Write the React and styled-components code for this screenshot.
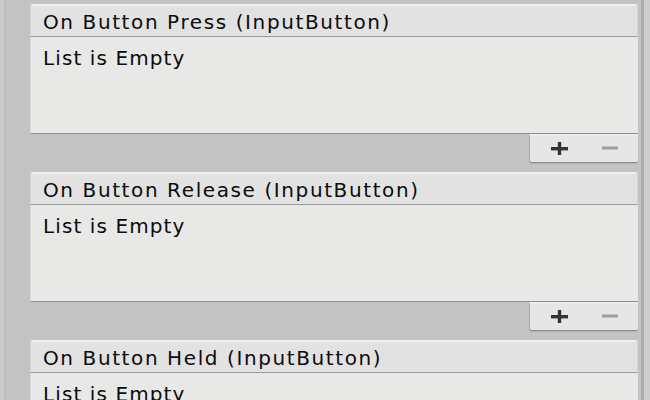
import React from 'react';
import styled, { createGlobalStyle } from 'styled-components';

const GlobalStyle = createGlobalStyle`
  html, body {
    margin: 0;
    padding: 0;
    background: #c3c3c3;
  }
  body {
    font-family: "DejaVu Sans", Verdana, sans-serif;
  }
`;

const Page = styled.div`
  display: flex;
  width: 650px;
  height: 400px;
  overflow: hidden;
  background: #c3c3c3;
`;

const Gutter = styled.div`
  width: 4px;
  flex: none;
  background: #cbcbcb;
  border-right: 2px solid #bdbdbd;
`;

const List = styled.div`
  flex: 1;
  display: flex;
  flex-direction: column;
  gap: 9px;
  padding: 4px 3px 0 24px;
`;

const ScrollEdge = styled.div`
  width: 6px;
  flex: none;
  background: #cdcdcd;
  border-left: 3px solid #ababab;
`;

const Event = styled.div`
  display: flex;
  flex-direction: column;
  flex: none;
`;

const Header = styled.div`
  height: 33px;
  box-sizing: border-box;
  padding: 5px 0 0 12px;
  background: #e2e2e2;
  border: 1px solid #d6d6d6;
  border-top-color: #eeeeee;
  border-bottom: 1px solid #9c9c9c;
  border-radius: 3px 3px 0 0;
  box-shadow: inset 0 1px 0 #f2f2f2;
  color: #0c0c0c;
  font-size: 20px;
  line-height: 24px;
  letter-spacing: 1.6px;
  white-space: nowrap;
`;

const Body = styled.div`
  height: 97px;
  box-sizing: border-box;
  padding: 9px 0 0 12px;
  background: #e8e8e7;
  border-left: 1px solid #d9d9d9;
  border-bottom: 1px solid #8e8e8e;
  color: #0c0c0c;
  font-size: 20px;
  line-height: 24px;
  letter-spacing: 1.1px;
`;

const Footer = styled.div`
  align-self: flex-end;
  width: 109px;
  height: 29px;
  box-sizing: border-box;
  display: flex;
  align-items: center;
  gap: 21px;
  padding: 0 0 2px 14px;
  background: #e6e6e6;
  border-top: 2px solid #ededed;
  border-left: 1px solid #a8a8a8;
  border-bottom: 1px solid #8a8a8a;
  border-radius: 0 0 3px 3px;
  box-shadow: 0 1px 0 #b4b4b4;
`;

const Tool = styled.span`
  display: flex;
  align-items: center;
  justify-content: center;
  width: 30px;
  height: 20px;
`;

const PlusIcon = () => (
  <svg width="17" height="13" viewBox="0 0 17 13">
    <rect x="0" y="5" width="17" height="3.4" fill="#343434" />
    <rect x="6.8" y="0" width="3.4" height="13" fill="#343434" />
  </svg>
);

const MinusIcon = () => (
  <svg width="16" height="4" viewBox="0 0 16 4">
    <rect x="0" y="0.5" width="16" height="3" fill="#9c9c9c" />
  </svg>
);

const events = [
  'On Button Press (InputButton)',
  'On Button Release (InputButton)',
  'On Button Held (InputButton)',
];

const UnityEvent = ({ title }) => (
  <Event>
    <Header>{title}</Header>
    <Body>List is Empty</Body>
    <Footer>
      <Tool><PlusIcon /></Tool>
      <Tool><MinusIcon /></Tool>
    </Footer>
  </Event>
);

export default function App() {
  return (
    <>
      <GlobalStyle />
      <Page>
        <Gutter />
        <List>
          {events.map((title) => (
            <UnityEvent key={title} title={title} />
          ))}
        </List>
        <ScrollEdge />
      </Page>
    </>
  );
}
